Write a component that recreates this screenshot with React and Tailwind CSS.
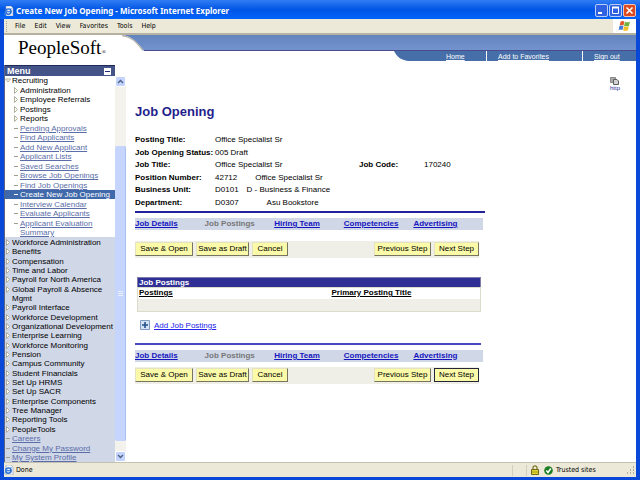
const sections = {
  recruiting: [
    { label: 'Recruiting', kind: 'open' },
    { label: 'Administration', kind: 'folder', nested: true },
    { label: 'Employee Referrals', kind: 'folder', nested: true },
    { label: 'Postings', kind: 'folder', nested: true },
    { label: 'Reports', kind: 'folder', nested: true },
    { label: 'Pending Approvals', kind: 'link', nested: true },
    { label: 'Find Applicants', kind: 'link', nested: true },
    { label: 'Add New Applicant', kind: 'link', nested: true },
    { label: 'Applicant Lists', kind: 'link', nested: true },
    { label: 'Saved Searches', kind: 'link', nested: true },
    { label: 'Browse Job Openings', kind: 'link', nested: true },
    { label: 'Find Job Openings', kind: 'link', nested: true },
    { label: 'Create New Job Opening', kind: 'link', nested: true, active: true },
    { label: 'Interview Calendar', kind: 'link', nested: true },
    { label: 'Evaluate Applicants', kind: 'link', nested: true },
    { label: 'Applicant Evaluation Summary', kind: 'link', nested: true },
  ],
  others: [
    { label: 'Workforce Administration', kind: 'folder' },
    { label: 'Benefits', kind: 'folder' },
    { label: 'Compensation', kind: 'folder' },
    { label: 'Time and Labor', kind: 'folder' },
    { label: 'Payroll for North America', kind: 'folder' },
    { label: 'Global Payroll & Absence Mgmt', kind: 'folder' },
    { label: 'Payroll Interface', kind: 'folder' },
    { label: 'Workforce Development', kind: 'folder' },
    { label: 'Organizational Development', kind: 'folder' },
    { label: 'Enterprise Learning', kind: 'folder' },
    { label: 'Workforce Monitoring', kind: 'folder' },
    { label: 'Pension', kind: 'folder' },
    { label: 'Campus Community', kind: 'folder' },
    { label: 'Student Financials', kind: 'folder' },
    { label: 'Set Up HRMS', kind: 'folder' },
    { label: 'Set Up SACR', kind: 'folder' },
    { label: 'Enterprise Components', kind: 'folder' },
    { label: 'Tree Manager', kind: 'folder' },
    { label: 'Reporting Tools', kind: 'folder' },
    { label: 'PeopleTools', kind: 'folder' },
    { label: 'Careers', kind: 'link' },
    { label: 'Change My Password', kind: 'link' },
    { label: 'My System Profile', kind: 'link' },
  ],
};

const fields = [
  { label: 'Posting Title:', value: 'Office Specialist Sr' },
  { label: 'Job Opening Status:', value: '005 Draft' },
  { label: 'Job Title:', value: 'Office Specialist Sr', extra: ['Job Code:', '170240'] },
  { label: 'Position Number:', value: '42712', detail: 'Office Specialist Sr', space: 'pl-[18px]' },
  { label: 'Business Unit:', value: 'D0101', detail: 'D - Business & Finance', space: 'pl-[8px]' },
  { label: 'Department:', value: 'D0307', detail: 'Asu Bookstore', space: 'pl-[28px]' },
];

const tabs = ['Job Details', 'Job Postings', 'Hiring Team', 'Competencies', 'Advertising'];

const IeIcon = () => (
  <svg className="w-[10px] h-[10px] shrink-0" viewBox="0 0 10 10">
    <path d="M2 0h5l2 2v8H2z" fill="#f4f6fb" stroke="#8d99b5" strokeWidth="0.6" />
    <circle cx="4.4" cy="5.6" r="2.7" fill="none" stroke="#2a6fd6" strokeWidth="1.5" />
    <path d="M2 5.7h5" stroke="#2a6fd6" strokeWidth="1.2" />
    <path d="M0.6 8.6C1 5.500 4.500 2.400 8 2.600" fill="none" stroke="#69a4ea" strokeWidth="0.7" />
  </svg>
);

const WindowsLogo = () => (
  <svg className="w-[13px] h-[12px]" viewBox="0 0 13 12">
    <path d="M2.600 1.600C4 .8 5.200 .8 6.400 1.500L5.500 5.400C4.300 4.700 3 4.700 1.600 5.400z" fill="#e2572b" />
    <path d="M7 1.800c1.300.7 2.600.7 5 0L11 5.700c-1.800.8-3.400.8-4.900 0z" fill="#6fb13c" />
    <path d="M1.500 6c1.300-.7 2.600-.7 3.900 0l-.9 3.900C3.300 9.200 2 9.200.6 9.900z" fill="#3f78d8" />
    <path d="M6 6.300c1.400.7 2.800.7 4.800 0l-.9 3.900c-1.600.8-3.300.8-4.800 0z" fill="#f4bf26" />
  </svg>
);

const TitleBar = () => (
  <div className="flex items-center h-[19px] shrink-0 pl-1 pr-[4px] pt-[2px] bg-gradient-to-b from-[#2f7df5] via-[#0055e5] to-[#0064fa]">
    <IeIcon />
    <h1 className="pl-[2px] grow text-[8px] font-bold text-white whitespace-nowrap font-['Noto_Sans',sans-serif]">
      Create New Job Opening - Microsoft Internet Explorer
    </h1>
    <div className="flex gap-px">
      <button aria-label="Minimize" className="w-[13px] h-[13px] rounded-xs border border-[#b9cdf7] bg-[#2f62e0]">
        <svg viewBox="0 0 11 11"><path d="M2 8h4" stroke="#fff" strokeWidth="2" /></svg>
      </button>
      <button aria-label="Maximize" className="w-[13px] h-[13px] rounded-xs border border-[#b9cdf7] bg-[#2f62e0]">
        <svg viewBox="0 0 11 11"><path d="M2.500 3v5.500h6V3" fill="none" stroke="#fff" /><path d="M2 2.500h7" stroke="#fff" strokeWidth="2" /></svg>
      </button>
      <button aria-label="Close" className="w-[13px] h-[13px] rounded-xs border border-[#f0c4b8] bg-[#dc4a22]">
        <svg viewBox="0 0 11 11"><path d="M2.500 2.500l6 6M8.500 2.500l-6 6" stroke="#fff" strokeWidth="1.600" /></svg>
      </button>
    </div>
  </div>
);

const MenuBar = () => (
  <div className="flex h-[16px] shrink-0 bg-[#ece9d8] border-b-2 border-[#b5b2a2]">
    <svg className="w-[5px] h-[14px]" viewBox="0 0 5 14">
      <path d="M2.500 2v11" stroke="#a5a292" strokeDasharray="1 1" />
    </svg>
    <nav className="flex grow items-center gap-[9px] pl-[6px] text-[7px] font-['DejaVu_Sans_Condensed',sans-serif]">
      {['File', 'Edit', 'View', 'Favorites', 'Tools', 'Help'].map((item) => (
        <button key={item}>{item}</button>
      ))}
    </nav>
    <div className="flex w-[23px] items-center justify-center bg-white">
      <WindowsLogo />
    </div>
  </div>
);

const Header = () => (
  <header className="flex h-[30px] shrink-0">
    <div className="w-[118px] pl-[14px] pt-[2px] font-['Liberation_Serif',serif] text-[19px] leading-[22px] whitespace-nowrap">
      PeopleSoft<span className="text-[6px]">®</span>
    </div>
    <svg className="w-[22px] h-[16px] shrink-0" viewBox="0 0 22 16">
      <defs>
        <linearGradient id="band" x1="0" y1="0" x2="0" y2="1">
          <stop offset="0" stopColor="#6484be" />
          <stop offset="1" stopColor="#7293cd" />
        </linearGradient>
      </defs>
      <path d="M0 0C10 1.500 15 7 22 16V0z" fill="url(#band)" />
      <path d="M0 .5C10 1.800 14 7 21 15.500" fill="none" stroke="#b9b6ae" strokeWidth="1.300" />
    </svg>
    <div className="flex grow flex-col">
      <div className="h-[16px] bg-gradient-to-b from-[#6484be] to-[#7293cd] border-b border-[#4b4a8a]" />
      <nav className="flex justify-end text-[7px] leading-[9px] text-white">
        <svg className="w-[14px] h-[10px]" viewBox="0 0 14 10">
          <path d="M0 0C3 6 7 9 14 10V0z" fill="#466ea8" />
        </svg>
        <div className="flex bg-[#466ea8]">
          <a href="#home" className="w-[78px] pl-[38px] pt-px underline">Home</a>
          <a href="#favorites" className="w-[96px] border-l border-white pl-[11px] pt-px underline">Add to Favorites</a>
          <a href="#signout" className="w-[54px] border-l border-white pl-[11px] pt-px underline">Sign out</a>
        </div>
      </nav>
    </div>
  </header>
);

const Marker = ({ kind, active }) => {
  if (kind === 'link') {
    return (
      <svg className="w-[6px] h-[9px] shrink-0" viewBox="0 0 6 9">
        <path d="M1 4.500h4" stroke={active ? '#ffffff' : '#a09d8c'} />
      </svg>
    );
  }
  return (
    <svg className="w-[6px] h-[9px] shrink-0" viewBox="0 0 6 9">
      <path d={kind === 'open' ? 'M.5 3h5L3 6z' : 'M1.500 1.500v6L4.500 4.500z'} fill="#fffdf0" stroke="#a09d8c" strokeWidth="0.8" />
    </svg>
  );
};

const MenuItem = ({ item }) => {
  const text = item.active ? 'text-white' : item.kind === 'link' ? 'text-[#5a6da8] underline' : 'text-black';
  return (
    <li className={`flex gap-px ${item.nested ? 'pl-[8px]' : ''} ${item.active ? 'bg-[#3f69aa]' : ''}`}>
      <Marker kind={item.kind} active={item.active} />
      <a href="#menu" className={text}>{item.label}</a>
    </li>
  );
};

const Sidebar = () => (
  <aside className="flex w-[111px] shrink-0 flex-col border-l border-[#5a6485]">
    <div className="flex h-[11px] items-center justify-between bg-[#445489] border-t border-[#1e2a58] pl-[2px] pr-[4px]">
      <h2 className="text-[9px] leading-[10px] font-bold text-white">Menu</h2>
      <button aria-label="Collapse menu" className="flex h-[7px] w-[7px] items-center justify-center bg-white">
        <span className="h-px w-[5px] bg-[#1e2a78]" />
      </button>
    </div>
    <ul className="flex h-[161px] flex-col justify-between text-[8px] leading-[9px]">
      {sections.recruiting.map((item) => <MenuItem key={item.label} item={item} />)}
    </ul>
    <ul className="flex grow flex-col justify-between bg-[#d0d7e7] pt-px text-[8px] leading-[9px]">
      {sections.others.map((item) => <MenuItem key={item.label} item={item} />)}
    </ul>
  </aside>
);

const ScrollBar = () => (
  <div className="mt-[11px] flex w-[11px] shrink-0 flex-col bg-[#f3f2ec]">
    <button aria-label="Scroll up" className="h-[11px] rounded-xs border border-white bg-[#c3d3fd]">
      <svg viewBox="0 0 9 9"><path d="M2 6l2.500-2.500L7 6" fill="none" stroke="#4d6185" strokeWidth="1.400" /></svg>
    </button>
    <div className="h-[59px]" />
    <div className="flex grow items-center justify-center rounded-xs border-r border-[#a9c0ee] bg-[#c6d5fd]">
      <svg className="w-[5px] h-[6px]" viewBox="0 0 5 6"><path d="M0 .5h5M0 2.500h5M0 4.500h5" stroke="#e8effe" /></svg>
    </div>
    <div className="h-[10px]" />
    <button aria-label="Scroll down" className="h-[11px] rounded-xs border border-white bg-[#c3d3fd]">
      <svg viewBox="0 0 9 9"><path d="M2 3l2.500 2.500L7 3" fill="none" stroke="#4d6185" strokeWidth="1.400" /></svg>
    </button>
  </div>
);

const StepButton = ({ children, className = '', selected }) => (
  <button
    className={`h-[14px] border bg-[#fbfaa9] whitespace-nowrap text-[8px] leading-[12px] ${
      selected ? 'border-[#26263a]' : 'border-t-[#e4e2c0] border-l-[#e4e2c0] border-r-[#77755f] border-b-[#77755f]'
    } ${className}`}
  >
    {children}
  </button>
);

const Tabs = () => (
  <nav className="mr-[2px] grid h-[12px] grid-cols-5 bg-[#d0d7e7] text-[8px] leading-[12px] font-bold">
    {tabs.map((tab) =>
      tab === 'Job Postings' ? (
        <span key={tab} className="text-[#777777]">{tab}</span>
      ) : (
        <a key={tab} href="#tab" className="text-[#1515c0] underline">{tab}</a>
      )
    )}
  </nav>
);

const Actions = ({ selected }) => (
  <div className="mr-[6px] flex gap-[3px] bg-[#efefe7] pt-px pb-[2px]">
    <StepButton className="w-[58px]">Save &amp; Open</StepButton>
    <StepButton className="w-[53px]">Save as Draft</StepButton>
    <StepButton className="w-[36px]">Cancel</StepButton>
    <StepButton className="ml-auto w-[57px]">Previous Step</StepButton>
    <StepButton className="w-[45px]" selected={selected}>Next Step</StepButton>
  </div>
);

const JobFields = () => (
  <dl className="grid h-[75px] text-[8px] leading-[12px]">
    {fields.map((field) => (
      <div key={field.label} className="flex whitespace-nowrap">
        <dt className="w-[80px] font-bold">{field.label}</dt>
        <dd className={field.extra ? 'w-[144px]' : ''}>{field.value}</dd>
        {field.detail && <dd className={field.space}>{field.detail}</dd>}
        {field.extra && (
          <>
            <dt className="w-[65px] font-bold">{field.extra[0]}</dt>
            <dd>{field.extra[1]}</dd>
          </>
        )}
      </div>
    ))}
  </dl>
);

const PostingsTable = () => (
  <table className="mt-[19px] ml-[2px] w-[344px] border border-[#dcdccb] text-left text-[8px] leading-[10px]">
    <caption className="border border-b-0 border-[#7d7da8] bg-[#2f2f96] pl-px text-left leading-[9px] font-bold text-white">Job Postings</caption>
    <thead>
      <tr>
        <th className="w-[193px] pb-px pl-px font-bold underline">Postings</th>
        <th className="pb-px pl-px font-bold underline">Primary Posting Title</th>
      </tr>
    </thead>
    <tbody>
      <tr className="h-[12px] bg-[#efefe7]">
        <td />
        <td />
      </tr>
    </tbody>
  </table>
);

const JobOpening = () => (
  <main className="grow pl-[9px] pr-[16px]">
    <div className="flex h-[40px] justify-end pt-[12px]">
      <a href="#http" className="flex h-[14px] flex-col items-center text-[6px] leading-[6px] text-[#2a2a9a]">
        <svg className="w-[9px] h-[8px]" viewBox="0 0 9 8">
          <path d="M.5.5h5v5h-5z" fill="#a8a8a8" stroke="#8a8a8a" />
          <path d="M3.500 2.500h3.500l1.500 1.500v3.500h-5z" fill="#d2d2d2" stroke="#5f5f5f" />
        </svg>
        http
      </a>
    </div>
    <div className="w-full max-w-[350px]">
      <h2 className="pb-[15px] text-[13px] leading-[14px] font-bold text-[#1f1f8c]">Job Opening</h2>
      <JobFields />
      <hr className="mt-[2px] mb-[5px] border-t-2 border-[#22229a]" />
      <Tabs />
      <div className="h-[11px]" />
      <Actions />
      <PostingsTable />
      <a href="#add" className="ml-[5px] mt-[8px] flex items-center gap-[4px] text-[8px] leading-[11px] text-[#2222e8] underline">
        <svg className="w-[10px] h-[10px]" viewBox="0 0 10 10">
          <path d="M.5.5h9v9h-9z" fill="#d5e2f2" stroke="#7f9cc4" />
          <path d="M5 2v6M2 5h6" stroke="#23528f" strokeWidth="1.600" />
        </svg>
        Add Job Postings
      </a>
      <hr className="mt-[12px] mb-[5px] mr-[4px] border-t-2 border-[#4a4ac0]" />
      <Tabs />
      <div className="h-[5px]" />
      <Actions selected />
    </div>
  </main>
);

const StatusBar = () => (
  <footer className="flex h-[15px] shrink-0 items-center border-t border-[#c4c1b0] bg-[#ece9d8] text-[7px] font-['DejaVu_Sans_Condensed',sans-serif]">
    <IeIcon />
    <span className="grow pl-[2px]">Done</span>
    <span className="h-[11px] w-[14px] border-l border-[#d2cfbe]" />
    <span className="flex h-[11px] w-[18px] items-center border-l border-[#d2cfbe] pl-[4px]">
      <svg className="w-[8px] h-[10px]" viewBox="0 0 8 10">
        <path d="M2 5V2.800a2 2 0 014 0V5" fill="none" stroke="#77711c" strokeWidth="1.200" />
        <path d="M.5 4.500h7v5h-7z" fill="#e3d52f" stroke="#6f6818" />
        <path d="M1 7h6" stroke="#a79c20" />
      </svg>
    </span>
    <span className="flex w-[83px] items-center gap-[3px]">
      <svg className="w-[9px] h-[9px]" viewBox="0 0 9 9">
        <circle cx="4.500" cy="4.500" r="4.300" fill="#1d7d23" />
        <path d="M2.300 4.500L4 6.500 6.800 2.500" fill="none" stroke="#fff" strokeWidth="1.500" />
      </svg>
      Trusted sites
    </span>
    <svg className="w-[9px] h-[9px]" viewBox="0 0 9 9">
      <path d="M6 1h1M6 4h1M3 4h1M6 7h1M3 7h1M0 7h1" stroke="#a09d8d" strokeWidth="1.400" />
    </svg>
  </footer>
);

function App() {
  return (
    <div className="flex h-screen flex-col overflow-hidden bg-[#0a48d8] font-['Liberation_Sans',Arial,sans-serif] text-black">
      <TitleBar />
      <div className="flex min-h-0 grow flex-col border-x-4 border-b-3 border-[#0a48d8] bg-white">
        <MenuBar />
        <Header />
        <div className="flex min-h-0 grow">
          <Sidebar />
          <ScrollBar />
          <JobOpening />
        </div>
        <StatusBar />
      </div>
    </div>
  );
}

export default App;
